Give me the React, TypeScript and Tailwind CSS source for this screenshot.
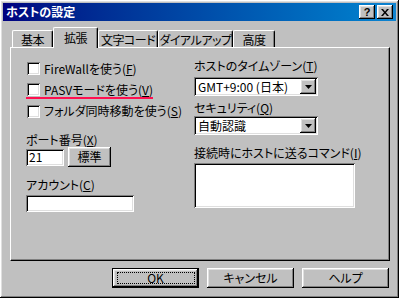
import React from 'react';

const raised =
  'shadow-[inset_-1px_-1px_#000000,inset_1px_1px_#ffffff,inset_-2px_-2px_#808080,inset_2px_2px_#dfdfdf]';
const sunken =
  'shadow-[inset_1px_1px_#808080,inset_-1px_-1px_#ffffff,inset_2px_2px_#000000,inset_-2px_-2px_#dfdfdf]';

const Mn: React.FC<{ k: string }> = ({ k }) => (
  <span>
    (<u className="underline-offset-1">{k}</u>)
  </span>
);

const Check: React.FC<{ children: React.ReactNode; mark?: boolean; h?: string }> = ({ children, mark, h = 'h-[21px]' }) => (
  <div className={`relative flex items-center ${h}`}>
    <span className={`ml-px w-[13px] h-[13px] bg-white shrink-0 ${sunken}`} />
    <span className="ml-[4px] whitespace-nowrap">{children}</span>
    {mark && <span className="absolute left-0 bottom-[1px] w-[127px] h-[2px] bg-[#ff1050]" />}
  </div>
);

const Select: React.FC<{ value: string }> = ({ value }) => (
  <div className={`w-[124px] h-[19px] bg-white flex items-center p-[2px] ${sunken}`}>
    <span className="flex-1 pl-[2px] whitespace-nowrap">{value}</span>
    <span className={`w-[16px] h-[15px] bg-[#c0c0c0] flex items-center justify-center ${raised}`}>
      <svg width="7" height="4" viewBox="0 0 7 4">
        <path d="M0 0h7L3.5 4z" fill="#000" />
      </svg>
    </span>
  </div>
);

const Tab: React.FC<{ label: string; w: string; active?: boolean }> = ({ label, w, active }) =>
  active ? (
    <div
      className={`${w} h-[21px] -mb-px relative z-10 bg-[#c0c0c0] border-t border-l border-white rounded-tl-[2px] rounded-tr-[2px] border-r border-r-black shadow-[inset_-1px_0_#808080] flex items-start justify-center pt-[3px] whitespace-nowrap tracking-[-0.5px]`}
    >
      {label}
    </div>
  ) : (
    <div
      className={`${w} h-[17px] bg-[#c0c0c0] border-t border-l border-white rounded-tl-[2px] rounded-tr-[2px] border-r border-r-black shadow-[inset_-1px_0_#808080] flex items-start justify-center pt-[2px] whitespace-nowrap tracking-[-0.5px]`}
    >
      {label}
    </div>
  );

const Button: React.FC<{ children: React.ReactNode; def?: boolean; w?: string }> = ({ children, def, w = 'w-[87px]' }) =>
  def ? (
    <div className={`${w} h-[20px] border border-black relative flex items-center justify-center`}>
      <div className={`absolute inset-0 ${raised}`} />
      <div className="absolute left-[4px] right-[3px] top-[3px] bottom-[3px] border border-dotted border-black" />
      <span className="relative">{children}</span>
    </div>
  ) : (
    <div className={`${w} h-[20px] flex items-center justify-center ${raised}`}>{children}</div>
  );

export default function App() {
  return (
    <div
      className={`w-[399px] h-[298px] bg-[#c0c0c0] text-[12px] leading-[14px] text-black font-['Noto_Sans_CJK_JP',sans-serif] [font-feature-settings:'palt'] flex flex-col ${raised}`}
    >
      {/* title bar */}
      <div className="ml-[3px] mt-[3px] w-[393px] h-[18px] bg-gradient-to-r from-[#000080] to-[#1084d0] flex items-center">
        <span className="pl-[3px] text-white font-bold flex-1">ホストの設定</span>
        <div className="flex gap-[2px] mr-[3px]">
          <div className={`w-[16px] h-[14px] bg-[#c0c0c0] flex items-center justify-center font-bold text-[11px] leading-none font-['Liberation_Sans',sans-serif] ${raised}`}>
            ?
          </div>
          <div className={`w-[16px] h-[14px] bg-[#c0c0c0] flex items-center justify-center ${raised}`}>
            <svg width="8" height="7" viewBox="0 0 8 7">
              <path d="M0 0h2l2 2.5L6 0h2L5 3.5 8 7H6L4 4.5 2 7H0l3-3.5z" fill="#000" />
            </svg>
          </div>
        </div>
      </div>

      {/* tabs */}
      <div className="ml-[12px] mt-[6px] h-[20px] flex items-end">
        <Tab label="基本" w="w-[41px]" />
        <Tab label="拡張" w="w-[45px]" active />
        <Tab label="文字コード" w="w-[60px]" />
        <Tab label="ダイアルアップ" w="w-[75px]" />
        <Tab label="高度" w="w-[42px]" />
      </div>

      {/* panel */}
      <div className="ml-[10px] w-[380px] h-[214px] border-t border-l border-white border-r border-b border-r-black border-b-black shadow-[inset_-1px_-1px_#808080] flex pl-[15px] pt-[10px]">
        <div className="w-[168px] flex flex-col">
          <Check>
            FireWallを使う<Mn k="F" />
          </Check>
          <Check mark>
            PASVモードを使う<Mn k="V" />
          </Check>
          <Check h="h-[22px]">
            フォルダ同時移動を使う<Mn k="S" />
          </Check>
          <div className="mt-[11px] h-[14px]">
            ポート番号<Mn k="X" />
          </div>
          <div className="h-[20px] flex items-center gap-[4px]">
            <div className={`w-[38px] h-[17px] bg-white flex items-center pl-[3px] ${sunken}`}>21</div>
            <Button w="w-[43px]">標準</Button>
          </div>
          <div className="mt-[11px] h-[14px]">
            アカウント<Mn k="C" />
          </div>
          <div className={`mt-[3px] w-[108px] h-[17px] bg-white ${sunken}`} />
        </div>

        <div className="flex flex-col">
          <div className="mt-[1px] h-[14px] whitespace-nowrap">
            ホストのタイムゾーン<Mn k="T" />
          </div>
          <div className="mt-[4px]">
            <Select value="GMT+9:00 (日本)" />
          </div>
          <div className="mt-[5px] h-[14px]">
            セキュリティ<Mn k="Q" />
          </div>
          <div className="mt-[1px]">
            <Select value="自動認識" />
          </div>
          <div className="mt-[11px] h-[14px] whitespace-nowrap">
            接続時にホストに送るコマンド<Mn k="I" />
          </div>
          <div className={`mt-[3px] w-[161px] h-[45px] bg-white ${sunken}`} />
        </div>
      </div>

      {/* buttons */}
      <div className="mt-[7px] ml-[112px] flex gap-[8px]">
        <Button def>OK</Button>
        <Button>キャンセル</Button>
        <Button>ヘルプ</Button>
      </div>
    </div>
  );
}
